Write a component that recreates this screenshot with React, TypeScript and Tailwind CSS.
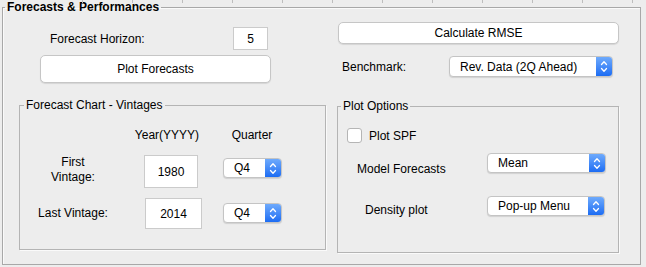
import React from 'react'

function Chevrons() {
  return (
    <svg width="16" height="21" viewBox="0 0 16 21" className="block">
      <path d="M5.5 8.5 L8 5.8 L10.5 8.5" fill="none" stroke="white" strokeWidth="1.3" strokeLinecap="round" strokeLinejoin="round" />
      <path d="M5.5 12.5 L8 15.2 L10.5 12.5" fill="none" stroke="white" strokeWidth="1.3" strokeLinecap="round" strokeLinejoin="round" />
    </svg>
  )
}

function PopUp({ label, className }: { label: string; className: string }) {
  return (
    <div className={"flex items-stretch rounded-[4px] border border-[#c4c4c4] bg-white shadow-[0_1px_1px_rgba(0,0,0,0.12)] overflow-hidden " + className}>
      <span className="flex-1 pl-[10px] flex items-center leading-none whitespace-nowrap">{label}</span>
      <span className="w-[16px] flex items-center justify-center bg-gradient-to-b from-[#6eaafc] to-[#1b6cf3]">
        <Chevrons />
      </span>
    </div>
  )
}

function PushButton({ label, className }: { label: string; className: string }) {
  return (
    <button className={"rounded-[5px] border border-[#c6c6c6] bg-white shadow-[0_1px_1px_rgba(0,0,0,0.1)] text-center leading-none " + className}>
      {label}
    </button>
  )
}

function EditBox({ value, className }: { value: string; className: string }) {
  return (
    <div className={"flex items-center justify-center border border-[#cbcbcb] bg-white " + className}>{value}</div>
  )
}

export default function App() {
  const ticks = [82, 132, 182, 232, 282, 332, 382, 432, 482, 532, 582, 632]

  return (
    <div className="relative w-[646px] h-[267px] overflow-hidden bg-[#ededed] text-[12px] text-black font-['Liberation_Sans',Arial,sans-serif]">
      {/* ruler ticks from the window behind */}
      <div className="absolute left-0 top-0 w-full h-[3px]">
        {ticks.map((x) => (
          <span key={x} className="absolute top-0 w-px h-[3px] bg-[#bdbdbd]" style={{ left: x }} />
        ))}
      </div>

      <fieldset className="ml-[2px] w-[639px] h-[265px] border border-[#a8a8a8] shadow-[inset_1px_1px_0_#fafafa]">
        <legend className="ml-[2px] px-[2px] font-bold leading-[14px]">Forecasts &amp; Performances</legend>

        <div className="flex pl-[16px]">
          {/* left column */}
          <div className="w-[307px] flex flex-col">
            <div className="mt-[13px] h-[23px] flex items-center">
              <span className="ml-[31px] w-[183px]">Forecast Horizon:</span>
              <EditBox value="5" className="w-[35px] h-[23px]" />
            </div>
            <PushButton label="Plot Forecasts" className="mt-[5px] ml-[21px] w-[231px] h-[28px]" />

            <fieldset className="mt-[15px] w-[307px] h-[152px] border border-[#b4b4b4] shadow-[1px_1px_0_#fafafa]">
              <legend className="ml-[4px] px-[2px] leading-[14px]">Forecast Chart - Vintages</legend>
              <div className="mt-[16px] h-[14px] flex leading-[14px]">
                <span className="w-[110px]" />
                <span className="w-[74px] text-center">Year(YYYY)</span>
                <span className="ml-[18px] w-[60px] text-center">Quarter</span>
              </div>
              <div className="mt-[13px] flex items-start">
                <span className="w-[106px] text-center leading-[15px]">
                  First
                  <br />
                  Vintage:
                </span>
                <EditBox value="1980" className="ml-[18px] w-[54px] h-[33px]" />
                <PopUp label="Q4" className="ml-[25px] mt-[3px] w-[59px] h-[20px]" />
              </div>
              <div className="mt-[10px] flex items-start">
                <span className="w-[106px] mt-[8px] text-center leading-[14px]">Last Vintage:</span>
                <EditBox value="2014" className="ml-[19px] w-[57px] h-[31px]" />
                <PopUp label="Q4" className="ml-[21px] mt-[5px] w-[59px] h-[20px]" />
              </div>
            </fieldset>
          </div>

          {/* right column */}
          <div className="ml-[11px] w-[283px] flex flex-col">
            <PushButton label="Calculate RMSE" className="mt-[8px] ml-[1px] w-[281px] h-[22px]" />
            <div className="mt-[12px] h-[21px] flex items-center">
              <span className="ml-[5px] w-[107px]">Benchmark:</span>
              <PopUp label="Rev. Data (2Q Ahead)" className="w-[164px] h-[21px]" />
            </div>

            <fieldset className="mt-[22px] w-[282px] h-[154px] border border-[#b4b4b4] shadow-[1px_1px_0_#fafafa]">
              <legend className="ml-[3px] px-[2px] leading-[14px]">Plot Options</legend>
              <div className="mt-[15px] h-[15px] flex items-center">
                <span className="ml-[9px] w-[15px] h-[15px] rounded-[3px] border border-[#b5b5b5] bg-white" />
                <span className="ml-[7px] leading-[14px]">Plot SPF</span>
              </div>
              <div className="mt-[10px] flex items-start">
                <span className="w-[149px] pl-[19px] mt-[9px] leading-[14px]">Model Forecasts</span>
                <PopUp label="Mean" className="w-[119px] h-[20px]" />
              </div>
              <div className="mt-[20px] flex items-start">
                <span className="w-[149px] pl-[27px] mt-[7px] leading-[14px]">Density plot</span>
                <PopUp label="Pop-up Menu" className="w-[118px] h-[20px]" />
              </div>
            </fieldset>
          </div>
        </div>
      </fieldset>
    </div>
  )
}
